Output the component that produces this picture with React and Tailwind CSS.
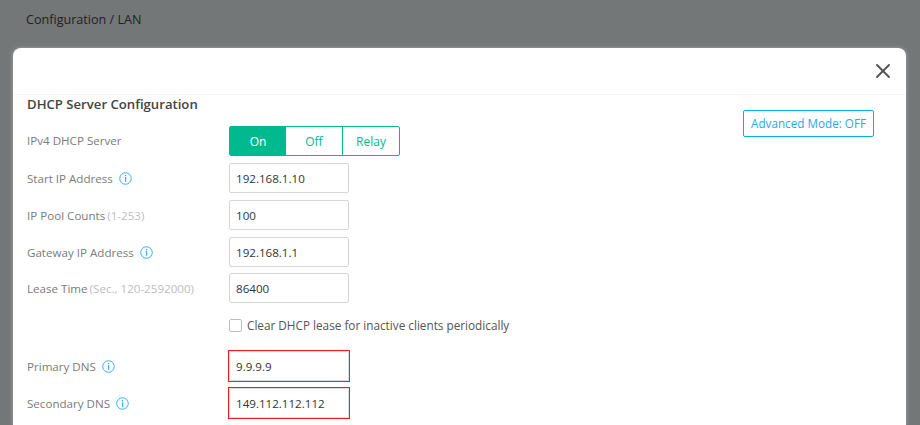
import { X } from "lucide-react";

const font = { fontFamily: '"Open Sans", "Noto Sans", sans-serif' };

function InfoIcon() {
  return (
    <svg width="13" height="13" viewBox="0 0 13 13" fill="none" className="ml-[6px] shrink-0">
      <circle cx="6.5" cy="6.5" r="5.75" stroke="#35b0f0" strokeWidth="1" />
      <rect x="5.9" y="3" width="1.3" height="1.3" fill="#35b0f0" />
      <rect x="5.9" y="5.2" width="1.3" height="4.6" fill="#35b0f0" />
    </svg>
  );
}

function Field({ label, hint, info, value, error, className }) {
  return (
    <div className={`flex items-center ${className}`}>
      <div className="w-[202px] pt-px flex items-center text-[11.6px] text-[#7b7b7b]">
        <span>{label}</span>
        {hint && <span className="ml-[2px] text-[#bdbdbd]">{hint}</span>}
        {info && <InfoIcon />}
      </div>
      {error ? (
        <div className="ml-[-1px] w-[122px] h-[32px] border border-[#ee1c25]">
          <div className="h-full border border-[#dedede] pl-[6px] pt-px flex items-center text-[11.6px] text-[#333]">
            {value}
          </div>
        </div>
      ) : (
        <div className="w-[120px] h-[30px] border border-[#d6d6d6] rounded-[2px] pl-[6px] pt-px flex items-center text-[11.6px] text-[#333]">
          {value}
        </div>
      )}
    </div>
  );
}

export default function App() {
  return (
    <div className="w-[920px] h-[425px] overflow-hidden bg-[#747777] flex flex-col" style={font}>
      <div className="h-[48px] pl-[26px] pt-[11px] text-[12.6px] text-[#222]">Configuration / LAN</div>

      <div className="ml-[13px] w-[893px] flex-1 bg-white rounded-t-[8px] shadow-[0_0_4px_rgba(255,255,255,0.35)]">
        <div className="h-[47px] border-b border-[#f5f5f5] flex items-center justify-end pr-[11px]">
          <X size={24} strokeWidth={1.9} className="text-[#555]" />
        </div>

        <div className="relative pl-[14px]">
          <button className="absolute right-[32px] top-[15px] h-[27px] w-[131px] border border-[#00aeef] rounded-[2px] text-[11.7px] text-[#2aa8e8]">
            Advanced Mode: OFF
          </button>

          <h2 className="h-[31px] text-[13.15px] leading-[18px] font-semibold text-[#444]">
            DHCP Server Configuration
          </h2>

          <div className="flex items-center h-[30px]">
            <div className="w-[202px] text-[11.6px] text-[#7b7b7b]">IPv4 DHCP Server</div>
            <div className="flex h-[30px] w-[171px] border border-[#00b98e] rounded-[2px] text-xs">
              <div className="w-[56px] pt-px bg-[#00b98e] text-white flex items-center justify-center">On</div>
              <div className="w-[57px] pt-px text-[#00b98e] flex items-center justify-center border-r border-[#00b98e]">Off</div>
              <div className="flex-1 pt-px text-[#00b98e] flex items-center justify-center">Relay</div>
            </div>
          </div>

          <Field className="mt-[7px]" label="Start IP Address" info value="192.168.1.10" />
          <Field className="mt-[7px]" label="IP Pool Counts" hint="(1-253)" value="100" />
          <Field className="mt-[7px]" label="Gateway IP Address" info value="192.168.1.1" />
          <Field className="mt-[6px]" label="Lease Time" hint="(Sec., 120-2592000)" value="86400" />

          <div className="mt-[16px] ml-[202px] flex items-center h-[13px]">
            <div className="w-[13px] h-[13px] border border-[#bdbdbd] rounded-[2px]" />
            <span className="ml-[5px] text-[11.75px] text-[#555]">Clear DHCP lease for inactive clients periodically</span>
          </div>

          <Field className="mt-[18px]" label="Primary DNS" info value="9.9.9.9" error />
          <Field className="mt-[5px]" label="Secondary DNS" info value="149.112.112.112" error />
        </div>
      </div>
    </div>
  );
}
